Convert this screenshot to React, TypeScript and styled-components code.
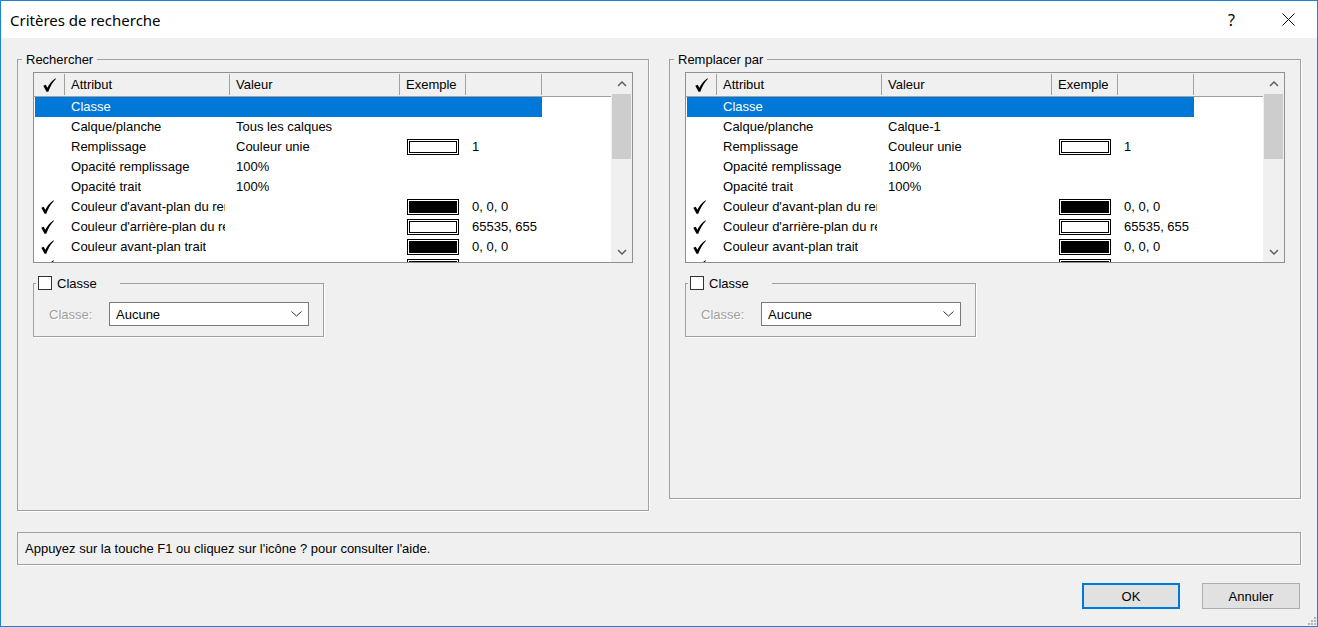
import React from 'react';
import styled, { createGlobalStyle } from 'styled-components';

const GlobalStyle = createGlobalStyle`
  html, body { margin: 0; padding: 0; background: #ffffff; }
  body {
    font-family: "Liberation Sans", Arial, sans-serif;
    font-size: 13px;
    color: #000;
  }
  * { box-sizing: border-box; }
`;

interface Row {
    check?: boolean;
    attr: string;
    value?: string;
    swatch?: 'white' | 'black';
    sample?: string;
    selected?: boolean;
}

const buildRows = (layer: string): Row[] => [
    { attr: 'Classe', selected: true },
    { attr: 'Calque/planche', value: layer },
    { attr: 'Remplissage', value: 'Couleur unie', swatch: 'white', sample: '1' },
    { attr: 'Opacité remplissage', value: '100%' },
    { attr: 'Opacité trait', value: '100%' },
    { check: true, attr: "Couleur d'avant-plan du remplissage", swatch: 'black', sample: '0, 0, 0' },
    { check: true, attr: "Couleur d'arrière-plan du remplissage", swatch: 'white', sample: '65535, 65535, 65535' },
    { check: true, attr: 'Couleur avant-plan trait', swatch: 'black', sample: '0, 0, 0' },
    { check: true, attr: 'Couleur arrière-plan trait', swatch: 'white', sample: '65535, 65535, 65535' },
];

const Window = styled.div`
  position: relative;
  width: 1318px;
  height: 627px;
  border: 1px solid #1e81d6;
  background: #f0f0f0;
  display: flex;
  flex-direction: column;
  overflow: hidden;
`;

const TitleBar = styled.div`
  height: 37px;
  background: #ffffff;
  display: flex;
  align-items: center;
  padding-left: 9px;
  flex-shrink: 0;
`;

const Title = styled.div`
  flex: 1;
  font-family: "Segoe UI", "Noto Sans", "Open Sans", sans-serif;
  font-size: 15px;
  color: #000;
`;

const TitleButton = styled.div`
  width: 57px;
  height: 37px;
  display: flex;
  align-items: center;
  justify-content: center;
  font-family: "Segoe UI", "Noto Sans", "Open Sans", sans-serif;
  font-size: 16px;
`;

const Body = styled.div`
  flex: 1;
  display: flex;
  flex-direction: column;
  padding: 13px 16px 0 16px;
`;

const Panels = styled.div`
  display: flex;
  gap: 20px;
  align-items: flex-start;
`;

const Group = styled.fieldset<{ $height: number }>`
  margin: 0;
  padding: 0;
  width: 632px;
  height: ${p => p.$height}px;
  border: 1px solid #a0a0a0;
  box-shadow: 1px 1px 0 #ffffff;
  min-width: 0;
`;

const GroupLegend = styled.legend`
  margin-left: 4px;
  padding: 0 4px;
  line-height: 17px;
  font-size: 13px;
`;

const GroupBody = styled.div`
  padding: 4px 15px 0 15px;
  display: flex;
  flex-direction: column;
  align-items: flex-start;
`;

const ListBox = styled.div`
  width: 600px;
  height: 191px;
  border: 1px solid #8f8f8f;
  background: #ffffff;
  display: flex;
`;

const ListMain = styled.div`
  flex: 1;
  min-width: 0;
  display: flex;
  flex-direction: column;
  overflow: hidden;
`;

const HeaderRow = styled.div`
  height: 24px;
  flex-shrink: 0;
  background: #f0f0f0;
  border-bottom: 1px solid #a0a0a0;
  display: grid;
  grid-template-columns: 31px 165px 170px 66px 76px;
`;

const HeaderCell = styled.div<{ $center?: boolean }>`
  display: flex;
  align-items: center;
  justify-content: ${p => (p.$center ? 'center' : 'flex-start')};
  padding-left: ${p => (p.$center ? '0' : '6px')};
  background: linear-gradient(#a0a0a0, #a0a0a0) right 1px / 1px calc(100% - 2px) no-repeat;
  white-space: nowrap;
  overflow: hidden;
`;

const RowsArea = styled.div`
  flex: 1;
  overflow: hidden;
`;

const ListRow = styled.div<{ $selected?: boolean }>`
  height: 20px;
  margin-left: 1px;
  width: 507px;
  display: grid;
  grid-template-columns: 30px 165px 170px 66px 76px;
  align-items: center;
  background: ${p => (p.$selected ? '#0078d7' : 'transparent')};
  color: ${p => (p.$selected ? '#ffffff' : '#000000')};
`;

const Cell = styled.div<{ $center?: boolean; $pad?: number }>`
  height: 20px;
  display: flex;
  align-items: center;
  justify-content: ${p => (p.$center ? 'center' : 'flex-start')};
  padding: 0 5px 0 ${p => (p.$center ? 0 : p.$pad ?? 6)}px;
  min-width: 0;
`;

const Clip = styled.span`
  display: block;
  overflow: hidden;
  white-space: nowrap;
  line-height: 20px;
`;

const SwatchFrame = styled.div`
  width: 52px;
  height: 16px;
  border: 1px solid #000;
  padding: 1px;
  background: #fff;
  flex-shrink: 0;
`;

const SwatchFill = styled.div<{ $fill: string }>`
  width: 100%;
  height: 100%;
  border: 1px solid #000;
  background: ${p => p.$fill};
`;

const ScrollBar = styled.div`
  width: 21px;
  background: #f0f0f0;
  display: flex;
  flex-direction: column;
`;

const ScrollButton = styled.div`
  height: 21px;
  display: flex;
  align-items: center;
  justify-content: center;
`;

const ScrollThumb = styled.div`
  height: 65px;
  margin: 0 1px;
  background: #cdcdcd;
`;

const ScrollTrack = styled.div`
  flex: 1;
`;

const SubGroup = styled.fieldset`
  margin: 12px 0 0 0;
  padding: 0;
  width: 291px;
  height: 62px;
  border: 1px solid #a0a0a0;
  box-shadow: 1px 1px 0 #ffffff;
  min-width: 0;
`;

const CheckLegend = styled.legend`
  margin-left: 2px;
  padding: 0 23px 0 2px;
  height: 16px;
  display: flex;
  align-items: center;
`;

const CheckBox = styled.span`
  width: 14px;
  height: 14px;
  border: 1px solid #333333;
  background: #ffffff;
  margin-right: 5px;
`;

const FieldRow = styled.div`
  display: flex;
  align-items: center;
  padding: 11px 0 0 15px;
`;

const FieldLabel = styled.span`
  width: 60px;
  color: #a0a0a0;
  text-shadow: 1px 1px 0 #ffffff;
`;

const Select = styled.div`
  width: 200px;
  height: 24px;
  border: 1px solid #7a7a7a;
  background: #ffffff;
  display: flex;
  align-items: center;
  justify-content: space-between;
  padding: 0 6px 0 6px;
`;

const StatusBox = styled.div`
  margin-top: 21px;
  height: 33px;
  border: 1px solid #a0a0a0;
  box-shadow: 1px 1px 0 #ffffff;
  display: flex;
  align-items: center;
  padding-left: 7px;
`;

const ButtonRow = styled.div`
  margin-top: 18px;
  display: flex;
  justify-content: flex-end;
  gap: 22px;
  padding-right: 1px;
`;

const Button = styled.div<{ $default?: boolean }>`
  width: 98px;
  height: 26px;
  background: #e1e1e1;
  border: ${p => (p.$default ? '2px solid #0078d7' : '1px solid #adadad')};
  display: flex;
  align-items: center;
  justify-content: center;
  font-size: 13px;
`;

const Grip = styled.svg`
  position: absolute;
  right: 1px;
  bottom: 1px;
`;

const CheckMark = () => (
    <svg width="13" height="14" viewBox="0 0 13 14">
        <path
            d="M0.3 7.8 L2.7 6.7 L4.4 9.8 C6.3 5.9 8.8 2.7 12.6 0.2 L12.9 0.9 C9.7 3.9 7.2 8.1 5.3 13.8 L3.5 13.8 Z"
            fill="#000"
        />
    </svg>
);

const Chevron = ({ up }: { up?: boolean }) => (
    <svg width="10" height="6" viewBox="0 0 10 6">
        <polyline
            points={up ? '1,5 5,1 9,5' : '1,1 5,5 9,1'}
            fill="none"
            stroke="#606060"
            strokeWidth="1.5"
        />
    </svg>
);

const AttributeList = ({ layer }: { layer: string }) => (
    <ListBox>
        <ListMain>
            <HeaderRow>
                <HeaderCell $center>
                    <CheckMark />
                </HeaderCell>
                <HeaderCell>Attribut</HeaderCell>
                <HeaderCell>Valeur</HeaderCell>
                <HeaderCell>Exemple</HeaderCell>
                <HeaderCell />
            </HeaderRow>
            <RowsArea>
                {buildRows(layer).map((row, i) => (
                    <ListRow key={i} $selected={row.selected}>
                        <Cell $center>{row.check && <CheckMark />}</Cell>
                        <Cell>
                            <Clip>{row.attr}</Clip>
                        </Cell>
                        <Cell>
                            <Clip>{row.value}</Clip>
                        </Cell>
                        <Cell $pad={7}>
                            {row.swatch && (
                                <SwatchFrame>
                                    <SwatchFill $fill={row.swatch === 'black' ? '#000' : '#fff'} />
                                </SwatchFrame>
                            )}
                        </Cell>
                        <Cell>
                            <Clip>{row.sample}</Clip>
                        </Cell>
                    </ListRow>
                ))}
            </RowsArea>
        </ListMain>
        <ScrollBar>
            <ScrollButton>
                <Chevron up />
            </ScrollButton>
            <ScrollThumb />
            <ScrollTrack />
            <ScrollButton>
                <Chevron />
            </ScrollButton>
        </ScrollBar>
    </ListBox>
);

const CriteriaPanel = ({ title, layer, height }: { title: string; layer: string; height: number }) => (
    <Group $height={height}>
        <GroupLegend>{title}</GroupLegend>
        <GroupBody>
            <AttributeList layer={layer} />
            <SubGroup>
                <CheckLegend>
                    <CheckBox />
                    Classe
                </CheckLegend>
                <FieldRow>
                    <FieldLabel>Classe:</FieldLabel>
                    <Select>
                        <span>Aucune</span>
                        <svg width="11" height="6" viewBox="0 0 11 6">
                            <polyline points="0.5,0.5 5.5,5 10.5,0.5" fill="none" stroke="#333" strokeWidth="1" />
                        </svg>
                    </Select>
                </FieldRow>
            </SubGroup>
        </GroupBody>
    </Group>
);

export default function App() {
    return (
        <>
            <GlobalStyle />
            <Window>
                <TitleBar>
                    <Title>Critères de recherche</Title>
                    <TitleButton>?</TitleButton>
                    <TitleButton>
                        <svg width="13" height="13" viewBox="0 0 13 13">
                            <path d="M0.5 0.5 L12.5 12.5 M12.5 0.5 L0.5 12.5" stroke="#000" strokeWidth="1" />
                        </svg>
                    </TitleButton>
                </TitleBar>
                <Body>
                    <Panels>
                        <CriteriaPanel title="Rechercher" layer="Tous les calques" height={460} />
                        <CriteriaPanel title="Remplacer par" layer="Calque-1" height={448} />
                    </Panels>
                    <StatusBox>Appuyez sur la touche F1 ou cliquez sur l'icône ? pour consulter l'aide.</StatusBox>
                    <ButtonRow>
                        <Button $default>OK</Button>
                        <Button>Annuler</Button>
                    </ButtonRow>
                </Body>
                <Grip width="10" height="10" viewBox="0 0 10 10">
                    <rect x="8" y="2" width="2" height="2" fill="#b5b5b5" />
                    <rect x="5" y="5" width="2" height="2" fill="#b5b5b5" />
                    <rect x="8" y="5" width="2" height="2" fill="#b5b5b5" />
                    <rect x="2" y="8" width="2" height="2" fill="#b5b5b5" />
                    <rect x="5" y="8" width="2" height="2" fill="#b5b5b5" />
                    <rect x="8" y="8" width="2" height="2" fill="#b5b5b5" />
                </Grip>
            </Window>
        </>
    );
}
